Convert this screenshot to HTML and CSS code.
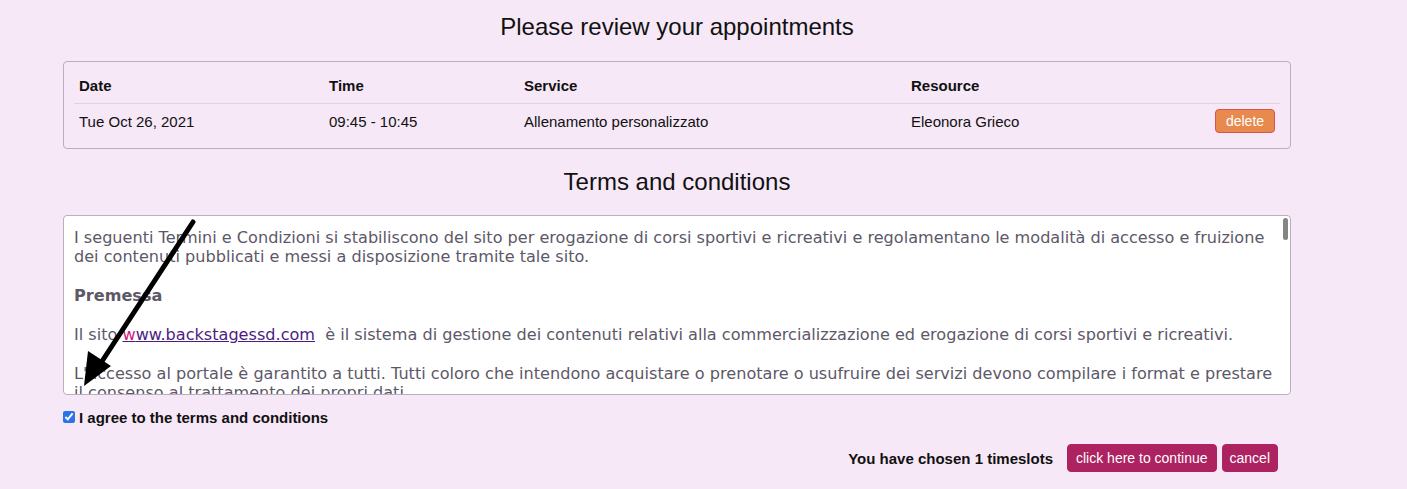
FILE: index.html
```html
<!DOCTYPE html>
<html>
<head>
<meta charset="utf-8">
<link rel="stylesheet" href="styles.css">
</head>
<body>
<div class="page">
  <h2 class="title">Please review your appointments</h2>
  <div class="table-box">
    <table class="appts">
      <thead>
        <tr><th class="c-date">Date</th><th class="c-time">Time</th><th class="c-svc">Service</th><th class="c-res">Resource</th><th class="c-act"></th></tr>
      </thead>
      <tbody>
        <tr><td>Tue Oct 26, 2021</td><td>09:45 - 10:45</td><td>Allenamento personalizzato</td><td>Eleonora Grieco</td><td class="c-act"><button class="btn-delete">delete</button></td></tr>
      </tbody>
    </table>
  </div>
  <h2 class="title title2">Terms and conditions</h2>
  <div class="terms-wrap">
    <div class="terms">
      <p>I seguenti Termini e Condizioni si stabiliscono del sito per erogazione di corsi sportivi e ricreativi e regolamentano le modalità di accesso e fruizione dei contenuti pubblicati e messi a disposizione tramite tale sito.</p>
      <p><b>Premessa</b></p>
      <p>Il sito <a href="#"><span class="hover-w">w</span>ww.backstagessd.com</a>&nbsp; è il sistema di gestione dei contenuti relativi alla commercializzazione ed erogazione di corsi sportivi e ricreativi.</p>
      <p>L'accesso al portale è garantito a tutti. Tutti coloro che intendono acquistare o prenotare o usufruire dei servizi devono compilare i format e prestare il consenso al trattamento dei propri dati.</p>
      <p>Il trattamento dei dati personali avviene nel rispetto della normativa vigente.</p>
    </div>
    <div class="scroll-thumb"></div>
    <svg class="arrow" width="140" height="180" viewBox="0 0 140 180">
      <line x1="130" y1="7" x2="32" y2="157" stroke="#000" stroke-width="5" stroke-linecap="round"/>
      <polygon points="21,171 25,136 48,151" fill="#000"/>
    </svg>
  </div>
  <label class="agree"><input type="checkbox" checked> I agree to the terms and conditions</label>
  <div class="footer">
    <span class="chosen">You have chosen 1 timeslots</span>
    <button class="btn-main">click here to continue</button>
    <button class="btn-main btn-cancel">cancel</button>
  </div>
</div>
</body>
</html>
```

FILE: styles.css
```css
html, body {
  margin: 0;
  padding: 0;
  background: #f6e8f7;
}
body {
  font-family: "Liberation Sans", Arial, sans-serif;
  color: #111;
}
.page {
  width: 1228px;
  margin-left: 63px;
  padding-top: 13px;
}
.title {
  margin: 0;
  text-align: center;
  font-weight: normal;
  font-size: 24px;
  line-height: 28px;
  color: #111;
}
.title2 {
  margin-top: 19px;
}
.table-box {
  margin-top: 20px;
  border: 1px solid #b8b0bd;
  border-radius: 4px;
  padding: 9px 10px 15px 10px;
}
.appts {
  width: 100%;
  border-collapse: collapse;
  font-size: 15px;
  line-height: 17px;
}
.appts th {
  text-align: left;
  font-weight: bold;
  padding: 6px 5px 9px 5px;
  border-bottom: 1px solid #dcd5de;
}
.appts td {
  padding: 5px 5px 0 5px;
  height: 24px;
  vertical-align: middle;
}
.c-date { width: 240px; }
.c-time { width: 185px; }
.c-svc { width: 377px; }
.c-res { width: 260px; }
.appts td.c-act { text-align: right; }
.btn-delete {
  font-family: "Liberation Sans", Arial, sans-serif;
  font-size: 14px;
  color: #fff;
  background: #e8894e;
  border: 1px solid #d9534f;
  border-radius: 4px;
  width: 60px;
  height: 24px;
  padding: 0;
  vertical-align: middle;
}
.terms-wrap {
  position: relative;
  margin-top: 19px;
}
.terms {
  box-sizing: border-box;
  height: 180px;
  overflow: hidden;
  background: #fff;
  border: 1px solid #b8b0bd;
  border-radius: 4px;
  padding: 0 13px 0 10px;
  font-family: Verdana, "DejaVu Sans", sans-serif;
  font-size: 16.1px;
  line-height: 19px;
  color: #5d5868;
}
.terms p {
  margin: 0 0 20px 0;
}
.terms p:first-child { margin-top: 12px; }
.terms a { color: #4b1d82; text-decoration: underline; }
.terms a .hover-w { color: #d0187c; }
.scroll-thumb {
  position: absolute;
  right: 3px;
  top: 3px;
  width: 5px;
  height: 22px;
  border-radius: 3px;
  background: #858585;
}
.arrow {
  position: absolute;
  left: 0;
  top: 0;
  pointer-events: none;
}
.agree {
  display: flex;
  align-items: center;
  gap: 4px;
  height: 18px;
  margin-top: 13px;
  font-size: 15px;
  font-weight: bold;
}
.agree input {
  margin: 0;
  width: 12px;
  height: 12px;
  accent-color: #2a73e8;
}
.footer {
  display: flex;
  justify-content: flex-end;
  align-items: center;
  gap: 5px;
  margin-top: 18px;
  padding-right: 13px;
}
.chosen {
  font-size: 15px;
  font-weight: bold;
  margin-right: 9px;
}
.btn-main {
  font-family: "Liberation Sans", Arial, sans-serif;
  font-size: 14px;
  color: #fff;
  background: #ad2260;
  border: 1px solid #ad2260;
  border-radius: 4px;
  height: 28px;
  padding: 0 8px;
}
.btn-cancel {
  padding: 0 7px;
}
```
